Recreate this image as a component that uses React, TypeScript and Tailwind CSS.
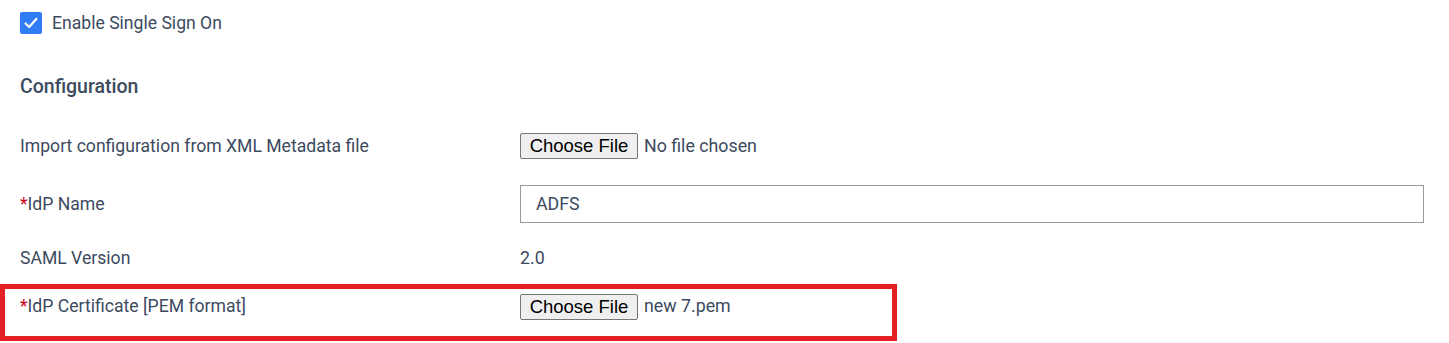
import React from 'react';

const labelFont = "font-['Roboto','Liberation_Sans',sans-serif]";

function FakeFileInput({ fileName }: { fileName: string }) {
    return (
        <div className="flex items-center">
            <span className="h-[26px] w-[118px] flex items-center justify-center bg-[#efefef] border border-[#767676] rounded-[2px] text-[18.5px] text-black font-['Liberation_Sans',Arial,sans-serif]">
                Choose File
            </span>
            <span className="ml-[6px] text-[17.8px] text-[#3c4a5e]">{fileName}</span>
        </div>
    );
}

function Row({ label, required, children, className = '' }: { label: string; required?: boolean; children: React.ReactNode; className?: string }) {
    return (
        <div className={`flex items-center ${className}`}>
            <div className="w-[500px] text-[17.6px] text-[#3c4a5e]">
                {required && <span className="text-[#d0021b]">*</span>}
                {label}
            </div>
            <div className="flex-1">{children}</div>
        </div>
    );
}

export default function App() {
    return (
        <div className={`w-[1449px] h-[343px] bg-white overflow-hidden ${labelFont}`}>
            <div className="pl-5 pt-[10px] h-[36px] flex items-center">
                <span className="w-[22px] h-[22px] rounded-[2px] bg-[#2f7cf6] flex items-center justify-center">
                    <svg width="16" height="16" viewBox="0 0 16 16" fill="none">
                        <path d="M2.5 8.5 L6.2 12 L13.5 3.8" stroke="white" strokeWidth="2.2" strokeLinecap="round" strokeLinejoin="round" />
                    </svg>
                </span>
                <span className="ml-[10px] text-[17.6px] text-[#3c4a5e]">Enable Single Sign On</span>
            </div>

            <div className="pl-5 mt-[36px] text-[19.5px] font-medium text-[#3c4a5e]">Configuration</div>

            <div className="pl-5 pr-[25px]">
                <Row label="Import configuration from XML Metadata file" className="h-[26px] mt-[32px]">
                    <FakeFileInput fileName="No file chosen" />
                </Row>
                <Row label="IdP Name" required className="h-[38px] mt-[26px]">
                    <div className="h-[38px] border border-[#999999] flex items-center pl-[15px] text-[17.8px] text-[#3c4a5e]">ADFS</div>
                </Row>
                <Row label="SAML Version" className="h-[26px] mt-[22px]">
                    <span className="text-[17.8px] text-[#3c4a5e]">2.0</span>
                </Row>
            </div>

            <div className="mt-[13px] w-[897px] h-[57px] border-[5px] border-[#e31e24] flex items-start pl-[15px] pt-[4px]">
                <div className="h-[26px] flex items-center w-[500px] text-[17.6px] text-[#3c4a5e]">
                    <span className="text-[#d0021b]">*</span>IdP Certificate [PEM format]
                </div>
                <FakeFileInput fileName="new 7.pem" />
            </div>
        </div>
    );
}
